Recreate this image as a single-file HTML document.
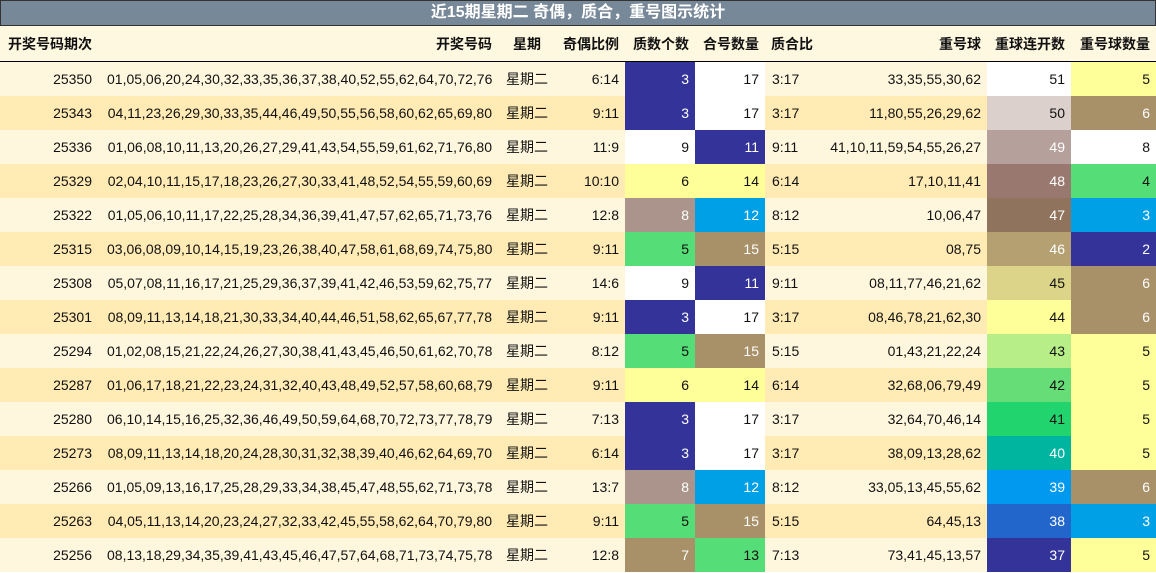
<!DOCTYPE html><html><head><meta charset="utf-8"><style>
body{margin:0;width:1156px;height:573px;overflow:hidden;background:#fff;font-family:"Liberation Sans","Noto Sans CJK SC",sans-serif;font-size:14px;color:#111}
.t{height:24px;background:#778899;border:1px solid #333;color:#fff;font-weight:bold;font-size:16px;text-align:center;line-height:24px;box-sizing:content-box;width:1154px}
table{border-collapse:collapse;table-layout:fixed;width:1156px}
td{padding:0 6px;height:34px;text-align:right;white-space:nowrap;overflow:hidden}
td:first-child{padding-right:9px}
tr.h td{height:35px;font-weight:bold;background:#fff8e1;border-bottom:1px solid #000}
tr:nth-child(even) td{background:#fff7dd}
tr:nth-child(odd):not(.h) td{background:#ffebb3}
td.c{text-align:center}
td.l{text-align:left;padding-left:7px}
td.w{color:#fff}
</style></head><body>
<div class="t">近15期星期二 奇偶，质合，重号图示统计</div>
<table>
<colgroup><col style="width:101px"><col style="width:397px"><col style="width:58px"><col style="width:69px"><col style="width:70px"><col style="width:70px"><col style="width:57px"><col style="width:165px"><col style="width:84px"><col style="width:85px"></colgroup>
<tr class="h"><td style="text-align:left;padding-left:8px">开奖号码期次</td><td>开奖号码</td><td class="c">星期</td><td>奇偶比例</td><td>质数个数</td><td>合号数量</td><td style="text-align:left">质合比</td><td>重号球</td><td>重球连开数</td><td>重号球数量</td></tr>
<tr><td>25350</td><td>01,05,06,20,24,30,32,33,35,36,37,38,40,52,55,62,64,70,72,76</td><td class="c">星期二</td><td>6:14</td><td class="w" style="background:#333399!important">3</td><td style="background:#fff!important">17</td><td class="l">3:17</td><td>33,35,55,30,62</td><td style="background:#ffffff!important">51</td><td style="background:#ffff99!important">5</td></tr>
<tr><td>25343</td><td>04,11,23,26,29,30,33,35,44,46,49,50,55,56,58,60,62,65,69,80</td><td class="c">星期二</td><td>9:11</td><td class="w" style="background:#333399!important">3</td><td style="background:#fff!important">17</td><td class="l">3:17</td><td>11,80,55,26,29,62</td><td style="background:#dcd0cc!important">50</td><td class="w" style="background:#a89068!important">6</td></tr>
<tr><td>25336</td><td>01,06,08,10,11,13,20,26,27,29,41,43,54,55,59,61,62,71,76,80</td><td class="c">星期二</td><td>11:9</td><td style="background:#fff!important">9</td><td class="w" style="background:#333399!important">11</td><td class="l">9:11</td><td>41,10,11,59,54,55,26,27</td><td class="w" style="background:#b6a09c!important">49</td><td style="background:#fff!important">8</td></tr>
<tr><td>25329</td><td>02,04,10,11,15,17,18,23,26,27,30,33,41,48,52,54,55,59,60,69</td><td class="c">星期二</td><td>10:10</td><td style="background:#ffff99!important">6</td><td style="background:#ffff99!important">14</td><td class="l">6:14</td><td>17,10,11,41</td><td class="w" style="background:#98786f!important">48</td><td style="background:#55dd77!important">4</td></tr>
<tr><td>25322</td><td>01,05,06,10,11,17,22,25,28,34,36,39,41,47,57,62,65,71,73,76</td><td class="c">星期二</td><td>12:8</td><td class="w" style="background:#aa948c!important">8</td><td class="w" style="background:#00a0e6!important">12</td><td class="l">8:12</td><td>10,06,47</td><td class="w" style="background:#90735c!important">47</td><td class="w" style="background:#00a0e6!important">3</td></tr>
<tr><td>25315</td><td>03,06,08,09,10,14,15,19,23,26,38,40,47,58,61,68,69,74,75,80</td><td class="c">星期二</td><td>9:11</td><td style="background:#55dd77!important">5</td><td class="w" style="background:#a89068!important">15</td><td class="l">5:15</td><td>08,75</td><td class="w" style="background:#b5a072!important">46</td><td class="w" style="background:#333399!important">2</td></tr>
<tr><td>25308</td><td>05,07,08,11,16,17,21,25,29,36,37,39,41,42,46,53,59,62,75,77</td><td class="c">星期二</td><td>14:6</td><td style="background:#fff!important">9</td><td class="w" style="background:#333399!important">11</td><td class="l">9:11</td><td>08,11,77,46,21,62</td><td style="background:#dcd488!important">45</td><td class="w" style="background:#a89068!important">6</td></tr>
<tr><td>25301</td><td>08,09,11,13,14,18,21,30,33,34,40,44,46,51,58,62,65,67,77,78</td><td class="c">星期二</td><td>9:11</td><td class="w" style="background:#333399!important">3</td><td style="background:#fff!important">17</td><td class="l">3:17</td><td>08,46,78,21,62,30</td><td style="background:#ffff99!important">44</td><td class="w" style="background:#a89068!important">6</td></tr>
<tr><td>25294</td><td>01,02,08,15,21,22,24,26,27,30,38,41,43,45,46,50,61,62,70,78</td><td class="c">星期二</td><td>8:12</td><td style="background:#55dd77!important">5</td><td class="w" style="background:#a89068!important">15</td><td class="l">5:15</td><td>01,43,21,22,24</td><td style="background:#b8ee88!important">43</td><td style="background:#ffff99!important">5</td></tr>
<tr><td>25287</td><td>01,06,17,18,21,22,23,24,31,32,40,43,48,49,52,57,58,60,68,79</td><td class="c">星期二</td><td>9:11</td><td style="background:#ffff99!important">6</td><td style="background:#ffff99!important">14</td><td class="l">6:14</td><td>32,68,06,79,49</td><td style="background:#66dd77!important">42</td><td style="background:#ffff99!important">5</td></tr>
<tr><td>25280</td><td>06,10,14,15,16,25,32,36,46,49,50,59,64,68,70,72,73,77,78,79</td><td class="c">星期二</td><td>7:13</td><td class="w" style="background:#333399!important">3</td><td style="background:#fff!important">17</td><td class="l">3:17</td><td>32,64,70,46,14</td><td style="background:#22d46e!important">41</td><td style="background:#ffff99!important">5</td></tr>
<tr><td>25273</td><td>08,09,11,13,14,18,20,24,28,30,31,32,38,39,40,46,62,64,69,70</td><td class="c">星期二</td><td>6:14</td><td class="w" style="background:#333399!important">3</td><td style="background:#fff!important">17</td><td class="l">3:17</td><td>38,09,13,28,62</td><td class="w" style="background:#00b5a0!important">40</td><td style="background:#ffff99!important">5</td></tr>
<tr><td>25266</td><td>01,05,09,13,16,17,25,28,29,33,34,38,45,47,48,55,62,71,73,78</td><td class="c">星期二</td><td>13:7</td><td class="w" style="background:#aa948c!important">8</td><td class="w" style="background:#00a0e6!important">12</td><td class="l">8:12</td><td>33,05,13,45,55,62</td><td class="w" style="background:#0099f0!important">39</td><td class="w" style="background:#a89068!important">6</td></tr>
<tr><td>25263</td><td>04,05,11,13,14,20,23,24,27,32,33,42,45,55,58,62,64,70,79,80</td><td class="c">星期二</td><td>9:11</td><td style="background:#55dd77!important">5</td><td class="w" style="background:#a89068!important">15</td><td class="l">5:15</td><td>64,45,13</td><td class="w" style="background:#2266cc!important">38</td><td class="w" style="background:#00a0e6!important">3</td></tr>
<tr><td>25256</td><td>08,13,18,29,34,35,39,41,43,45,46,47,57,64,68,71,73,74,75,78</td><td class="c">星期二</td><td>12:8</td><td class="w" style="background:#a89068!important">7</td><td style="background:#55dd77!important">13</td><td class="l">7:13</td><td>73,41,45,13,57</td><td class="w" style="background:#333399!important">37</td><td style="background:#ffff99!important">5</td></tr>
</table>
</body></html>
